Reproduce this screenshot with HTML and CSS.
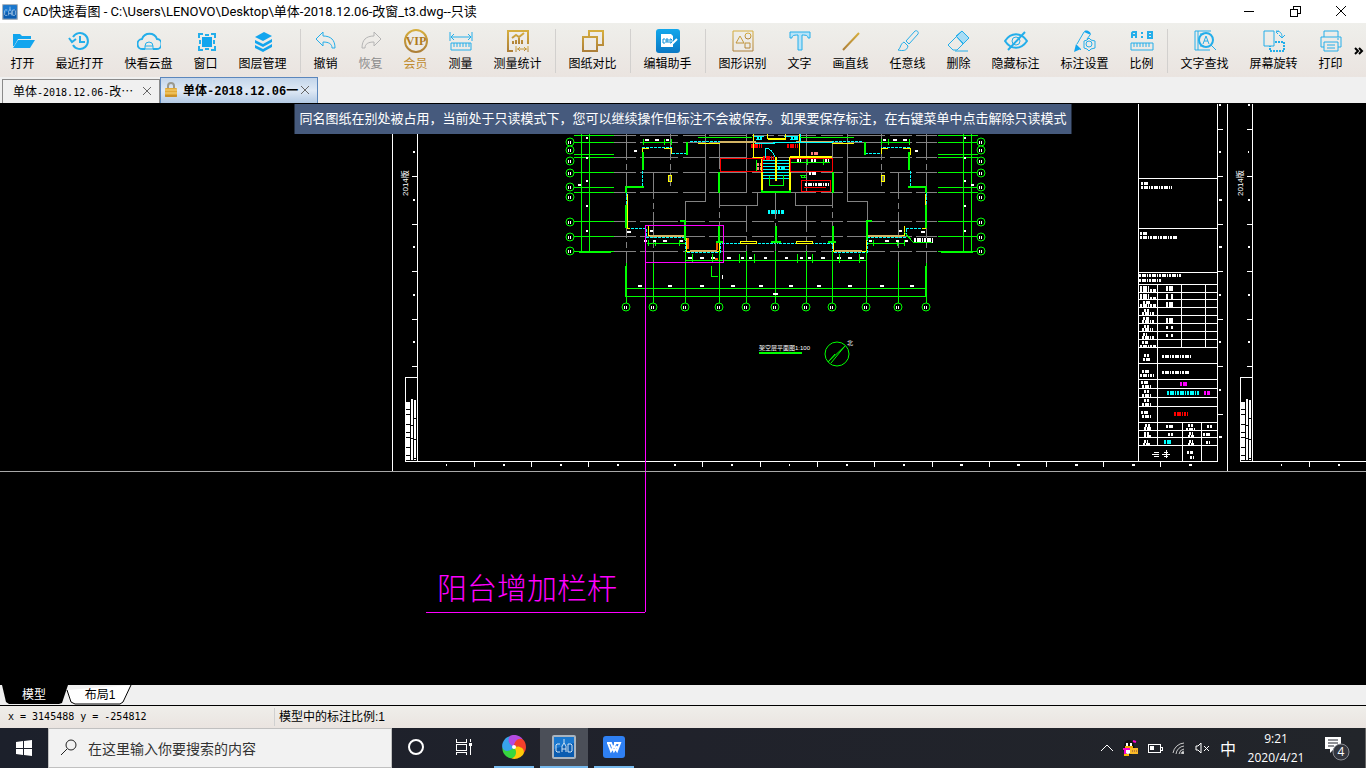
FILE: index.html
```
<!DOCTYPE html>
<html lang="zh-CN">
<head>
  <meta charset="utf-8">
  <title>CAD快速看图</title>
  <link rel="stylesheet" href="styles.css">
</head>
<body>

  <svg class="defs" width="0" height="0">
    <defs>
      <linearGradient id="gold" x1="0" y1="0" x2="0" y2="1">
        <stop offset="0" stop-color="#d6ae3e"/>
        <stop offset="1" stop-color="#ad7f38"/>
      </linearGradient>
      <linearGradient id="blue" x1="0" y1="0" x2="0" y2="1">
        <stop offset="0" stop-color="#12a8ec"/>
        <stop offset="1" stop-color="#0a78c4"/>
      </linearGradient>
      <symbol id="cad-logo" viewBox="0 0 24 24">
        <rect width="24" height="24" rx="2" fill="#a9b4bf"/>
        <rect x="2" y="2" width="20" height="20" fill="#0a5cb0"/>
        <path d="M2 2h20v6L2 14z" fill="#1a78cf"/>
        <path d="M8 9H5l-1 1v6l1 1h3M10 17V11l2-3 2 3v6M10 14h4M12 4v4M16 9v8h3l1-1v-6l-1-1z" fill="none" stroke="#cfe2f2"/>
      </symbol>
    </defs>
  </svg>

  <header class="titlebar">
    <svg class="app-icon" width="16" height="16"><use href="#cad-logo"/></svg>
    <h1>CAD快速看图 - C:\Users\LENOVO\Desktop\单体-2018.12.06-改窗_t3.dwg--只读</h1>
    <div class="win-buttons">
      <button aria-label="最小化"><svg width="12" height="12"><path d="M1 6h10"/></svg></button>
      <button aria-label="还原"><svg width="12" height="12"><path d="M1 4h7v7H1zM4 4V1h7v7H8"/></svg></button>
      <button aria-label="关闭"><svg class="smooth" width="12" height="12"><path d="M1 1l10 10M11 1L1 11"/></svg></button>
    </div>
  </header>

  <nav class="toolbar">
    <button class="tool w2"><svg viewBox="0 0 24 24"><path class="fill" d="M2 5h7l2 2h9v3H7l-4 7H2z"/><path class="fill" d="M7 11h17l-5 8H2z"/></svg>打开</button>
    <button class="tool w4"><svg viewBox="0 0 24 24"><path d="M5 16a8 8 0 1 0 0-8M1 9l3 4 4-3M12 7v6h5" stroke-width="2"/></svg>最近打开</button>
    <button class="tool w4"><svg viewBox="0 0 24 24"><path d="M8 20H6a5 5 0 0 1-1-10 8 8 0 0 1 15 0 5 5 0 0 1-1 10h-3" stroke-width="2"/><path d="M8 20v-3a4 4 0 0 1 8 0v3zM8 17h8"/></svg>快看云盘</button>
    <button class="tool w2"><svg viewBox="0 0 24 24"><path class="fill" d="M8 8h10v10H8z"/><path d="M5 9V5h4M17 5h4v4M21 17v4h-4M9 21H5v-4M11 6h4M11 20h4M6 11v4M20 11v4" stroke-width="2"/></svg>窗口</button>
    <button class="tool w4"><svg viewBox="0 0 24 24"><path class="fill" d="M13 3l8 4-9 5-8-4z"/><path class="fill" d="M4 11l8 4 9-5v3l-9 5-8-4zM4 16l8 4 9-5v3l-9 5-8-4z"/></svg>图层管理</button>
    <i class="sep"></i>
    <button class="tool w2"><svg viewBox="0 0 24 24"><path d="M2 10l7-7v4c8 0 12 4 12 12h-3c0-4-3-6-9-6v4z"/></svg>撤销</button>
    <button class="tool w2 disabled" disabled><svg viewBox="0 0 24 24"><path d="M22 10l-7-7v4C7 7 3 11 3 19h3c0-4 3-6 9-6v4z"/></svg>恢复</button>
    <button class="tool w2 vip"><svg viewBox="0 0 24 24"><circle cx="12" cy="12" r="11" stroke-width="2"/><text x="12" y="16" text-anchor="middle">VIP</text></svg>会员</button>
    <button class="tool w2"><svg viewBox="0 0 24 24"><path d="M1 3v9M23 3v9M2 8h20M5 5L2 8l3 3M19 5l3 3-3 3M2 14h20v7H2zM5 14v4M8 14v4M11 14v4M14 14v4M17 14v4M20 14v4"/></svg>测量</button>
    <button class="tool w4 gold"><svg viewBox="0 0 24 24"><path d="M7 22H2V2h20v13" stroke-width="2"/><path d="M6 9l4-3 3 2 5-4M7 12v3M10 11v4M13 9v6M16 11v4" stroke-width="2"/><path d="M10 17v6M22 17v6M11 20h10M14 18l-2 2 2 2M18 18l2 2-2 2"/></svg>测量统计</button>
    <i class="sep"></i>
    <button class="tool w4 gold"><svg viewBox="0 0 24 24"><path d="M8 8V2h14v14h-6M2 8h14v14H2z" stroke-width="2"/></svg>图纸对比</button>
    <i class="sep"></i>
    <button class="tool w4"><svg viewBox="0 0 24 24"><rect width="24" height="24" rx="3" fill="url(#blue)" stroke="none"/><path d="M5 5h10l2 2v11H5z" fill="#fff" stroke="none"/><path d="M9 10H7v4h2M10 14v-4h2v4M10 12h2M14 10v4h1l1-1v-2l-1-1z" stroke="#0a8fd8"/><path d="M14 17l7-7" stroke="#fff" stroke-width="2"/></svg>编辑助手</button>
    <i class="sep"></i>
    <button class="tool w4 gold"><svg viewBox="0 0 24 24"><path d="M2 2h20v20H2zM5 14l4-7 4 7zM14 14h5v5h-5z"/><circle cx="17" cy="7" r="3"/></svg>图形识别</button>
    <button class="tool w2"><svg viewBox="0 0 24 24"><path d="M2 3h20v6h-2c0-2-1-3-6-3v15h-4V6C5 6 4 7 4 9H2z" fill="#b8e4f8"/></svg>文字</button>
    <button class="tool w3 gold"><svg viewBox="0 0 24 24"><path d="M4 21L20 4" stroke-width="2"/></svg>画直线</button>
    <button class="tool w3"><svg viewBox="0 0 24 24"><path d="M10 12l9-10c2-1 4 1 3 3l-9 10zM8 13l4 4c-1 5-5 5-10 4 3-2 2-6 6-8z"/></svg>任意线</button>
    <button class="tool w2"><svg viewBox="0 0 24 24"><path d="M9 7l6-5 7 7-6 6z" fill="#a8dcf5"/><path d="M15 2l7 7-12 12H6l-5-5zM9 7l7 7M8 22h13"/></svg>删除</button>
    <button class="tool w4"><svg viewBox="0 0 24 24"><path d="M1 12c6-9 16-9 22 0-6 9-16 9-22 0zM4 21L21 3" stroke-width="2"/><circle cx="12" cy="12" r="4"/></svg>隐藏标注</button>
    <button class="tool w4"><svg viewBox="0 0 24 24"><path d="M11 3L4 15M17 6l-3 4M3 16l5 5"/><path class="fill" d="M11 3c1-3 7-1 7 3zM3 15l5 5-7 3z"/><path d="M11 12l3-1 2-2 2 2 4 1v7l-4 1-2 2-2-2-3-1z" fill="#edeae6"/><circle cx="16" cy="15" r="3"/></svg>标注设置</button>
    <button class="tool w2 ratio"><svg viewBox="0 0 24 24"><path d="M2 9V4l1-1h3v6M2 6h4M12 3v2M12 7v2M18 3h4v6h-4zM18 6h4" stroke-width="2"/><path d="M1 14h22v7H1zM4 14v4M7 14v4M10 14v4M13 14v4M16 14v4M19 14v4"/></svg>比例</button>
    <i class="sep"></i>
    <button class="tool w4"><svg viewBox="0 0 24 24"><path d="M18 2H2v19h15M5 2v19M7 5h4M7 17h4" /><circle cx="13" cy="11" r="7" stroke-width="2"/><path d="M10 15l3-8 3 8M11 12h4M18 16l5 5"/></svg>文字查找</button>
    <button class="tool w4"><svg viewBox="0 0 24 24"><path d="M2 2h10v15H2zM14 2c4 0 6 2 6 6M17 2l-3 1 2 2M17 6l3 3 3-3"/><path d="M13 13h9v9H8v-5" stroke-width="2" stroke-dasharray="2 1"/></svg>屏幕旋转</button>
    <button class="tool w2"><svg viewBox="0 0 24 24"><path d="M5 8V2h14v6M5 18H2V8h20v10h-3M5 13h14v9H5zM8 16h8M8 19h8M18 10h2"/></svg>打印</button>
    <button class="more" aria-label="更多"><svg width="10" height="8"><path d="M1 1l3 3-3 3M5 1l3 3-3 3"/></svg></button>
  </nav>

  <div class="doc-tabs">
    <div class="doc-tab">
      <span>单体<b class="mono">-2018.12.06-</b>改⋯</span>
      <button aria-label="关闭"><svg width="8" height="8"><path d="M0 0l8 8M8 0L0 8"/></svg></button>
    </div>
    <div class="doc-tab active">
      <svg class="lock" width="12" height="15"><path d="M3 7V4a3 3 0 0 1 6 0v3" fill="none" stroke="#9a9a90" stroke-width="2"/><rect y="6" width="12" height="9" rx="1" fill="#e2a936"/><path d="M0 8h12M0 11h12" stroke="#f6d47c"/><path d="M0 14h12" stroke="#b47a1c"/></svg>
      <span>单体-2018.12.06一</span>
      <button aria-label="关闭"><svg width="8" height="8"><path d="M0 0l8 8M8 0L0 8"/></svg></button>
    </div>
  </div>

  <main class="canvas">
    <p class="notice">同名图纸在别处被占用，当前处于只读模式下，您可以继续操作但标注不会被保存。如果要保存标注，在右键菜单中点击解除只读模式</p>

    <svg class="drawing" viewBox="0 103 1366 582">
      <!-- sheet frames -->
      <g class="white">
        <path d="M392 104V471M417 104V461M405 461H1218M1227 104V471M1217 104V461M1138 104V461M1252 104V461M1240 461H1366"/>
        <path d="M405 461V377H417M1240 461V377H1252"/>
        <path d="M412 129h6M412 176h6M412 224h6M412 271h6M412 319h6M412 366h6"/>
        <path d="M1247 129h6M1247 176h6M1247 224h6M1247 271h6M1247 319h6M1247 366h6"/>
        <path d="M1217 129h6M1217 176h6M1217 224h6M1217 271h6M1217 319h6M1217 366h6M1217 414h6"/>
        <path d="M474 461v6M531 461v6M588 461v6M645 461v6M702 461v6M760 461v6M817 461v6M874 461v6M932 461v6M989 461v6M1046 461v6M1103 461v6M1160 461v6M1309 461v6"/>
      </g>
      <g class="marks">
        <path d="M413 152h2M413 200h2M413 247h2M413 295h2M413 342h2M1248 105h2M1248 152h1M1248 200h2M1248 247h2M1248 295h2M1248 342h2"/>
        <path d="M1219 105h2M1219 152h2M1219 200h3M1219 247h3M1219 295h2M1219 342h2M1219 390h2M1219 437h3"/>
        <path d="M446 465h1M503 465h2M560 465h2M617 465h2M674 465h2M731 465h2M789 465h1M846 465h2M903 465h2M960 465h3M1017 465h3M1075 465h3M1132 465h3M1189 465h3M1281 465h1M1338 465h2"/>
      </g>
      <g class="sidebars">
        <path d="M408 402V460M1243 402V460" stroke-width="4" stroke-dasharray="7 1 4 1 9 1"/>
        <path d="M412 399V460M1247 399V460" stroke-width="2" stroke-dasharray="26 1 12 1"/>
        <path d="M415 400V460M1250 400V460" stroke-width="2" stroke-dasharray="18 1 20 1"/>
      </g>
      <text class="label year" transform="translate(408 196) rotate(-90)">2014版</text>
      <text class="label year" transform="translate(1243 196) rotate(-90)">2014版</text>

      <!-- title block -->
      <path class="white" d="M1138 178h79M1138 228h79M1138 272h79M1138 284h79M1138 292h79M1138 299h79M1138 307h79M1138 315h79M1138 323h79M1138 331h79M1138 339h79M1138 347h79M1138 363h79M1138 379h79M1138 388h79M1138 397h79M1138 406h79M1138 422h79M1138 430h79M1138 437h79M1138 445h79M1157 284V445M1181 284V347M1205 284V347M1182 422V461M1201 422V461"/>
      <g class="scribble">
        <path d="M1141 183h7M1141 187h31M1140 233h8M1140 237h37M1139 275h43M1139 280h22"/>
        <path d="M1140 287h9M1140 290h16M1140 295h9M1140 298h16M1143 302h7M1140 305h16M1144 310h5M1142 313h12M1143 318h6M1142 321h13M1144 326h5M1142 329h11M1143 334h4M1142 337h12M1142 342h6M1140 346h16"/>
        <path d="M1166 287h8M1166 289h8M1166 295h3M1171 295h2M1166 297h3M1171 297h2M1166 303h8M1166 305h8M1166 319h8M1166 321h8M1166 327h3M1171 327h2M1166 335h3M1171 335h2"/>
        <path d="M1144 355h5M1143 359h8M1142 371h8M1140 375h14M1162 356h29M1162 372h27M1141 382h8M1142 386h10M1144 391h5M1142 395h10M1144 400h5M1142 404h10M1141 412h8M1142 416h10"/>
        <path d="M1145 425h5M1144 428h8M1144 433h5M1144 436h7M1144 441h4M1143 444h8M1166 426h8M1188 425h5M1186 429h10M1189 433h4M1188 436h6M1189 441h4M1188 444h6M1207 426h5M1203 434h8M1206 442h4M1168 434h5M1187 452h6M1190 457h4"/>
        <path class="m" d="M1180 384h7M1204 393h6"/>
        <path class="c" d="M1167 393h33M1164 442h8"/>
        <path class="r" d="M1174 414h14"/>
      </g>
      <path class="white" d="M1152 454h7M1154 452h5M1154 456h5M1162 454h8M1166 450v8M1164 452h4M1164 456h4"/>

      <!-- axis lines of the plan -->
      <g class="grey">
        <path stroke-dasharray="22 4 38 5" d="M614 135h323M614 142h323M614 157h323M614 172h323M614 192h323M614 221h323M614 236h323M614 251h323"/>
        <path stroke-dasharray="26 4 6 3" d="M626 134V264M653 173V262M670 134V186M719 143V251M746 206V251M775 193V251M806 206V251M832 143V251M881 134V186M898 173V262M926 134V264"/>
      </g>

      <!-- west half, mirrored below for the east half -->
      <g id="wing">
        <path class="grey" d="M705 134V201H685V222M757 192V205H719M746 134V192"/>
        <path class="green" d="M574 135h40M574 142h40M574 154h40M574 157h40M574 172h40M574 187h40M574 192h40M574 221h40M574 236h40M574 251h40M581 134V252M589 134V252M642 142H671M643 139V145M664 139V145M671 139V145M647 243H686M648 240V246M655 240V246M679 240V246M698 137H752"/>
        <path class="green wide" d="M579 252h32M626 266V297"/>
        <path class="cyan" d="M642 147H671V153H687M642 171V187M626 193V228H646V237H685V252H720V243H775M690 141H752"/>
        <path class="yellow" d="M642 155V148H649M664 148H671V154M627 194V228H630M648 226V235H684M686 238V251H719V243M740 241H756V243H740zM753 134V157H762M698 143H720"/>
        <path class="yellow" d="M668 175h3v6h-3z" fill="#777"/>
        <path class="tan" d="M720 142H756M650 236H685M690 251H717"/>
        <path class="wall" d="M643 152V170M644 187H626V193M626 205V228M687 155V142M685 240V221H680M719 193V172M719 243V226M776 242V226M762 170V192H776M716 242H724M771 242H776"/>
        <path class="marker" d="M645 140h4M655 140h4M666 140h3M644 241h3M653 241h3M663 241h4M680 241h3M688 258h4M700 258h4M711 258h4M727 258h4M741 258h3M749 258h3M764 258h3M638 286h4M668 286h4M700 286h4M731 286h4M759 286h4M586 138h2M586 158h2M586 181h2M586 206h2M586 231h2M578 185h3M634 151h3M627 232h4M650 231h3"/>
      </g>
      <use href="#wing" transform="translate(1552 0) scale(-1 1)"/>

      <!-- axis bubbles and bottom dimensions -->
      <path class="green" d="M626 288H926M626 296H926M685 260H866M626 263V303M653 262V303M685 251V303M719 251V303M746 251V303M775 251V303M806 251V303M832 251V303M866 251V303M898 262V303M926 263V303M692 254V263M712 254V263M739 254V263M754 254V263M797 254V263M812 254V263M839 254V263M859 254V263"/>
      <g class="green bubbles">
        <circle cx="570" cy="142" r="4"/><circle cx="570" cy="150" r="4"/><circle cx="570" cy="161" r="4"/><circle cx="570" cy="173" r="4"/><circle cx="570" cy="187" r="4"/><circle cx="570" cy="197" r="4"/><circle cx="570" cy="222" r="4"/><circle cx="570" cy="237" r="4"/><circle cx="570" cy="251" r="4"/>
        <circle cx="981" cy="142" r="4"/><circle cx="981" cy="150" r="4"/><circle cx="981" cy="161" r="4"/><circle cx="981" cy="173" r="4"/><circle cx="981" cy="187" r="4"/><circle cx="981" cy="197" r="4"/><circle cx="981" cy="222" r="4"/><circle cx="981" cy="237" r="4"/><circle cx="981" cy="251" r="4"/>
        <circle cx="626" cy="307" r="4"/><circle cx="653" cy="307" r="4"/><circle cx="685" cy="307" r="4"/><circle cx="719" cy="307" r="4"/><circle cx="746" cy="307" r="4"/><circle cx="775" cy="307" r="4"/><circle cx="806" cy="307" r="4"/><circle cx="832" cy="307" r="4"/><circle cx="866" cy="307" r="4"/><circle cx="898" cy="307" r="4"/><circle cx="926" cy="307" r="4"/>
      </g>
      <path class="axis-no" d="M568 142h4M568 150h4M568 161h4M568 173h4M568 187h4M568 197h4M568 222h4M568 237h4M568 251h4M979 142h4M979 150h4M979 161h4M979 173h4M979 187h4M979 197h4M979 222h4M979 237h4M979 251h4M624 307h4M651 307h4M683 307h4M717 307h4M744 307h4M773 307h4M804 307h4M830 307h4M864 307h4M896 307h4M924 307h4"/>
      <path class="marker" d="M773 294h5"/>

      <!-- stair core -->
      <path class="cyan-solid" d="M763 160h27M763 163h27M763 166h27M763 169h27M763 172h27M763 175h27M763 178h27M765 158V148C770 148 773 152 775 157M754 136h10M784 136h12M756 139h6M790 139h8M755 143h20M800 134v8M773 142h60"/>
      <path class="yellow wide" d="M776 157V181M768 139h18M762 157V190M790 157V190M790 157H832"/>
      <path class="yellow" d="M767 134v4h18v-4"/>
      <path class="green" d="M769 176V185H783V175M711 266V276H718M801 177H806M790 162H830M807 158V165M823 158V165M800 137h22M756 160V172"/>
      <path class="red" d="M720 158H762V171H720zM790 158H832V171H790zM801 180H830V191H801zM804 187H826"/>
      <g class="scribble">
        <path class="r" d="M751 146h11M787 146h11M763 158h11"/>
        <path class="c" d="M768 212h16M778 168h8M757 138h5M791 138h7"/>
        <path class="pink" d="M811 153h7M757 164h4M757 168h4"/>
        <path d="M809 173h8M805 184h24M914 239h19M914 241h19M797 160h4M811 160h5M825 160h4"/>
      </g>
      <path class="orange" d="M688 238V249M717 243V250M715 259H718"/>
      <path class="green" d="M904 232L913 242H932M800 175H806L803 178z"/>
      <path class="white" d="M722 275v4"/>

      <!-- caption and north arrow -->
      <text class="label caption" x="759" y="350">架空层平面图1:100</text>
      <path class="green wide" d="M759 353H802"/>
      <g class="green north"><circle cx="837" cy="354" r="12"/><path d="M828 362L845 346M831 363L845 346M828 362L835 354"/></g>
      <text class="label caption" x="847" y="345">北</text>

      <!-- annotation -->
      <path class="magenta" d="M645 612V225H723V262H645M426 612H645"/>
      <text class="note" x="437" y="599">阳台增加栏杆</text>
      <path class="crosshair" d="M0 471H1366"/>
    </svg>
  </main>

  <div class="layout-tabs">
    <svg class="tab-shapes" width="134" height="20"><path d="M2 0h66l-6 18-3 1H9l-3-2z" fill="#000"/><path d="M67 5l4 12 4 2h45l3-2 8-17" fill="#fff" stroke="#000"/></svg>
    <button class="layout-tab current">模型</button>
    <button class="layout-tab">布局1</button>
  </div>

  <footer class="statusbar">
    <span class="coords">x = 3145488 y = -254812</span>
    <span class="scale">模型中的标注比例:1</span>
  </footer>

  <div class="taskbar">
    <button class="start" aria-label="开始"><svg width="16" height="16"><path fill="#fff" d="M0 2l7-1v7H0zM8 1l8-1v8H8zM0 9h7v6l-7-1zM8 9h8v7l-8-1z"/></svg></button>
    <label class="search">
      <svg width="18" height="18"><circle cx="11" cy="6" r="5"/><path d="M7 10l-6 6"/></svg>
      <input type="text" placeholder="在这里输入你要搜索的内容" aria-label="搜索">
    </label>
    <button class="task" aria-label="Cortana"><svg width="18" height="18"><circle cx="9" cy="9" r="7" fill="none" stroke="#fff" stroke-width="2"/></svg></button>
    <button class="task" aria-label="任务视图"><svg class="crisp" width="18" height="16"><path d="M1 0v3h10V0M1 16v-3h10v3M1 5h10v6H1zM15 0v3M15 7v9" fill="none" stroke="#fff"/><path d="M14 4h3v3h-3z" fill="#fff"/></svg></button>
    <button class="task open" aria-label="浏览器">
      <svg width="24" height="24" viewBox="-12 -12 24 24"><path d="M0 0C-6-2-8-8-4-11-1-13 7-12 9-7 5-9 1-6 0 0z" fill="#b44be0"/><path d="M0 0C-6-2-8-8-4-11-1-13 7-12 9-7 5-9 1-6 0 0z" fill="#f4402c" transform="rotate(72)"/><path d="M0 0C-6-2-8-8-4-11-1-13 7-12 9-7 5-9 1-6 0 0z" fill="#ffc808" transform="rotate(144)"/><path d="M0 0C-6-2-8-8-4-11-1-13 7-12 9-7 5-9 1-6 0 0z" fill="#37d63f" transform="rotate(216)"/><path d="M0 0C-6-2-8-8-4-11-1-13 7-12 9-7 5-9 1-6 0 0z" fill="#38a3ec" transform="rotate(288)"/><circle r="2" fill="#fff"/></svg>
    </button>
    <button class="task open focused" aria-label="CAD快速看图"><svg width="24" height="24"><use href="#cad-logo"/></svg></button>
    <button class="task open" aria-label="WPS"><svg width="22" height="22"><rect width="22" height="22" rx="3" fill="#2f80f3"/><path d="M4 7h4l3 8 3-5M5 7l3 8 5-8M11 7h6l-3 8-3-5" fill="none" stroke="#fff" stroke-width="2"/></svg></button>

    <div class="tray">
      <svg width="12" height="8"><path d="M0 7l6-6 6 6" fill="none" stroke="#fff"/></svg>
      <svg width="16" height="16"><ellipse cx="7" cy="9" rx="6" ry="6" fill="#111"/><circle cx="7" cy="5" r="5" fill="#111"/><path d="M5 3v3M9 3v3" stroke="#fff" stroke-width="2"/><ellipse cx="6" cy="11" rx="3" ry="3" fill="#fff"/><path d="M3 7h8" stroke="#f2a800" stroke-width="2"/><path d="M1 9h9M3 10v4M11 1l3 1" stroke="#f0c" stroke-width="2"/><path d="M2 15h5" stroke="#fb0" stroke-width="2"/><rect x="8" y="8" width="8" height="6" fill="#f9b928"/><path d="M10 11h1M12 11h1M14 11h1" stroke="#844"/></svg>
      <svg class="crisp" width="16" height="10"><path d="M1 1h12v8H1zM14 4h1v3h-1" fill="none" stroke="#fff"/><path d="M3 3h4v4H3z" fill="#fff"/></svg>
      <svg width="14" height="14"><path d="M1 12A12 12 0 0 1 12 2M4 13a9 9 0 0 1 8-8M7 13a6 6 0 0 1 5-5M9 13a4 4 0 0 1 3-3" fill="none" stroke="#ccc"/><circle cx="11" cy="12" r="1" fill="#fff"/></svg>
      <svg width="16" height="12"><path d="M1 4h2l3-3v10L3 8H1zM9 4l5 5M14 4L9 9" fill="none" stroke="#fff"/></svg>
      <span class="ime">中</span>
      <div class="clock"><span>9:21</span><span>2020/4/21</span></div>
      <button class="action" aria-label="通知"><svg width="26" height="26"><path d="M0 2h16v12H9l-4 4v-4H0z" fill="#fff"/><path d="M3 5h10M3 8h10M3 11h6" stroke="#20232c"/><circle cx="16" cy="17" r="8" fill="#33363e" stroke="#8a8c92"/><text x="16" y="21" text-anchor="middle">4</text></svg></button>
    </div>
  </div>

</body>
</html>
```
FILE: styles.css
```
* {
  box-sizing: border-box;
}

body {
  margin: 0;
  height: 100vh;
  display: flex;
  flex-direction: column;
  overflow: hidden;
  background: #f0f0f0;
  color: #000;
  font-family: "Open Sans", "Noto Sans CJK SC", sans-serif;
  font-size: 12px;
}

button {
  margin: 0;
  padding: 0;
  border: none;
  background: none;
  color: inherit;
  font: inherit;
}

svg {
  display: block;
  flex: none;
}

.defs {
  position: absolute;
}

/* title bar */
.titlebar {
  flex: none;
  display: flex;
  align-items: center;
  height: 23px;
  padding-left: 2px;
  background: #fff;
}

.titlebar h1 {
  flex: 1;
  margin: 0 0 0 5px;
  font-family: Roboto, "Noto Sans CJK SC", sans-serif;
  font-size: 13px;
  font-weight: normal;
  line-height: 22px;
  white-space: nowrap;
}

.win-buttons {
  display: flex;
  align-self: flex-start;
  padding-right: 2px;
}

.win-buttons button {
  display: flex;
  align-items: center;
  justify-content: center;
  width: 46px;
  height: 21px;
}

.win-buttons svg {
  fill: none;
  stroke: #000;
  shape-rendering: crispEdges;
}

.win-buttons .smooth {
  shape-rendering: auto;
}

/* toolbar */
.toolbar {
  flex: none;
  display: flex;
  align-items: center;
  height: 54px;
  padding-top: 2px;
  background: linear-gradient(#efefeb, #eae4e0);
  font-family: "Liberation Sans", "Noto Sans CJK SC", sans-serif;
}

.tool {
  flex: none;
  display: flex;
  flex-direction: column;
  align-items: center;
  gap: 2px;
  height: 44px;
  line-height: 18px;
  white-space: nowrap;
}

.tool svg {
  width: 24px;
  height: 24px;
  fill: none;
  stroke: #24aeea;
}

.tool .fill {
  fill: #12a5ee;
  stroke: none;
}

.w2 { width: 45px; }
.w3 { width: 57px; }
.w4 { width: 69px; }

.gold svg,
.vip svg {
  stroke: url(#gold);
}

.vip {
  color: #bf8b2e;
}

.vip text {
  fill: #b07a1c;
  stroke: none;
  font-family: "Liberation Serif", serif;
  font-size: 12px;
  font-weight: bold;
}

.disabled {
  color: #8c8c8c;
}

.disabled svg {
  stroke: #b4b4b4;
}

.sep {
  flex: none;
  width: 1px;
  height: 44px;
  margin: 0 2px 0 3px;
  background: #d2d0ce;
}

.more {
  margin-left: auto;
  padding-right: 2px;
}

.more svg {
  fill: none;
  stroke: #000;
  stroke-width: 2px;
}

/* document tabs */
.doc-tabs {
  flex: none;
  display: flex;
  align-items: flex-end;
  height: 26px;
  padding-left: 2px;
}

.doc-tab {
  display: flex;
  align-items: center;
  width: 158px;
  height: 24px;
  padding: 0 8px 2px 10px;
  border: 1px solid #8a8a8a;
  border-bottom: none;
  font-family: "Liberation Mono", "Noto Sans CJK SC", monospace;
  white-space: nowrap;
}

.doc-tab span {
  flex: 1;
}

.doc-tab svg {
  stroke: #666;
}

.doc-tab.active {
  height: 26px;
  padding-left: 4px;
  border-color: #5b87bd;
  background: linear-gradient(#c3d5ea, #dfe9f5 50%, #b4cae4);
  font-weight: bold;
}

.doc-tab .lock {
  margin-right: 6px;
  stroke: none;
}

.mono {
  font-family: "DejaVu Sans Mono", monospace;
  font-size: 10px;
  font-weight: normal;
}

/* drawing area */
.canvas {
  position: relative;
  flex: 1;
  min-height: 0;
  background: #000;
}

.notice {
  position: absolute;
  top: 1px;
  left: 50%;
  transform: translateX(-50%);
  margin: 0;
  padding: 0 5px 2px;
  background: #465a7d;
  color: #fff;
  font-family: "Noto Sans CJK SC", sans-serif;
  font-size: 13px;
  line-height: 28px;
  white-space: nowrap;
}

.drawing {
  width: 100%;
  height: 100%;
  fill: none;
  shape-rendering: crispEdges;
}

.white { stroke: #fff; }
.grey { stroke: #828282; }
.green { stroke: #0f0; }
.red { stroke: #f00; }
.orange { stroke: #f05a00; stroke-width: 2; }
.yellow { stroke: #ff0; }
.tan { stroke: #d2b464; stroke-width: 2; }
.cyan { stroke: #0ff; stroke-dasharray: 3 1; }
.cyan-solid { stroke: #0ff; }
.magenta { stroke: #f0f; }
.crosshair { stroke: #a8a8a8; }
.wide { stroke-width: 2; }
.wall { stroke: #0f0; stroke-width: 2; }
.marks { stroke: #fff; stroke-width: 2; }
.marker { stroke: #fff; stroke-width: 2; }
.axis-no { stroke: #fff; stroke-width: 3; stroke-dasharray: 1 1; }
.sidebars { stroke: #fff; }

.bubbles,
.north {
  shape-rendering: auto;
}

.bubbles {
  fill: #000;
}

.scribble {
  stroke: #fff;
  stroke-width: 3;
  stroke-dasharray: 2 1 4 1 1 1;
}

.scribble .c { stroke: #0ff; stroke-width: 4; }
.scribble .m { stroke: #f0f; stroke-width: 4; }
.scribble .r { stroke: #f00; stroke-width: 4; }
.scribble .pink { stroke: #ff7f7f; }

.label {
  fill: #fff;
  font-family: "Liberation Sans", "Noto Sans CJK SC", sans-serif;
}

.year { font-size: 8px; }
.caption { font-size: 6px; }

.note {
  fill: #f0f;
  font-family: "Noto Sans CJK SC", sans-serif;
  font-size: 30px;
  font-weight: 300;
}

/* model / layout tabs */
.layout-tabs {
  position: relative;
  flex: none;
  display: flex;
  height: 21px;
  border-bottom: 1px solid #000;
}

.tab-shapes {
  position: absolute;
  top: 0;
  left: 0;
}

.layout-tab {
  position: relative;
  width: 64px;
  height: 20px;
  font-family: "Liberation Sans", "Noto Sans CJK SC", sans-serif;
  line-height: 20px;
}

.layout-tab.current {
  width: 68px;
  color: #fff;
}

/* status bar */
.statusbar {
  flex: none;
  display: flex;
  align-items: center;
  height: 22px;
  background: linear-gradient(#efeeea, #eae4e0);
}

.coords {
  width: 275px;
  padding-left: 8px;
  border-right: 1px solid #d0d0d0;
  font-family: "DejaVu Sans Mono", monospace;
  font-size: 10px;
  line-height: 18px;
}

.scale {
  padding-left: 4px;
  font-family: "Liberation Sans", "Noto Sans CJK SC", sans-serif;
  line-height: 18px;
}

/* taskbar */
.taskbar {
  flex: none;
  display: flex;
  height: 40px;
  background: linear-gradient(90deg, #1c202b, #20222b 50%, #22252a);
  color: #fff;
}

.taskbar button {
  display: flex;
  align-items: center;
  justify-content: center;
}

.start {
  width: 48px;
}

.search {
  display: flex;
  align-items: center;
  gap: 10px;
  width: 344px;
  padding-left: 11px;
  border: 1px solid #c0c0c0;
  background: #f2f2f2;
}

.search svg {
  fill: none;
  stroke: #222;
}

.search input {
  flex: 1;
  min-width: 0;
  padding: 0;
  border: none;
  outline: none;
  background: none;
  font-family: "Noto Sans CJK SC", sans-serif;
  font-size: 14px;
}

.search input::placeholder {
  color: #333;
}

.task {
  width: 48px;
  border-bottom: 2px solid transparent;
}

.task.open {
  width: 40px;
  margin: 0 6px;
  border-bottom-color: #76b9ed;
}

.task.focused {
  width: 48px;
  margin: 0;
  background: #4b4f58;
}

.crisp {
  shape-rendering: crispEdges;
}

.tray {
  display: flex;
  align-items: center;
  gap: 9px;
  margin-left: auto;
}

.ime {
  font-family: "Noto Sans CJK SC", sans-serif;
  font-size: 16px;
}

.clock {
  display: flex;
  flex-direction: column;
  align-items: center;
  width: 62px;
  line-height: 19px;
}

.action {
  width: 50px;
  height: 40px;
  padding-right: 6px;
  border-right: 1px solid #666;
}

.action text {
  fill: #fff;
  font-size: 12px;
}
```
